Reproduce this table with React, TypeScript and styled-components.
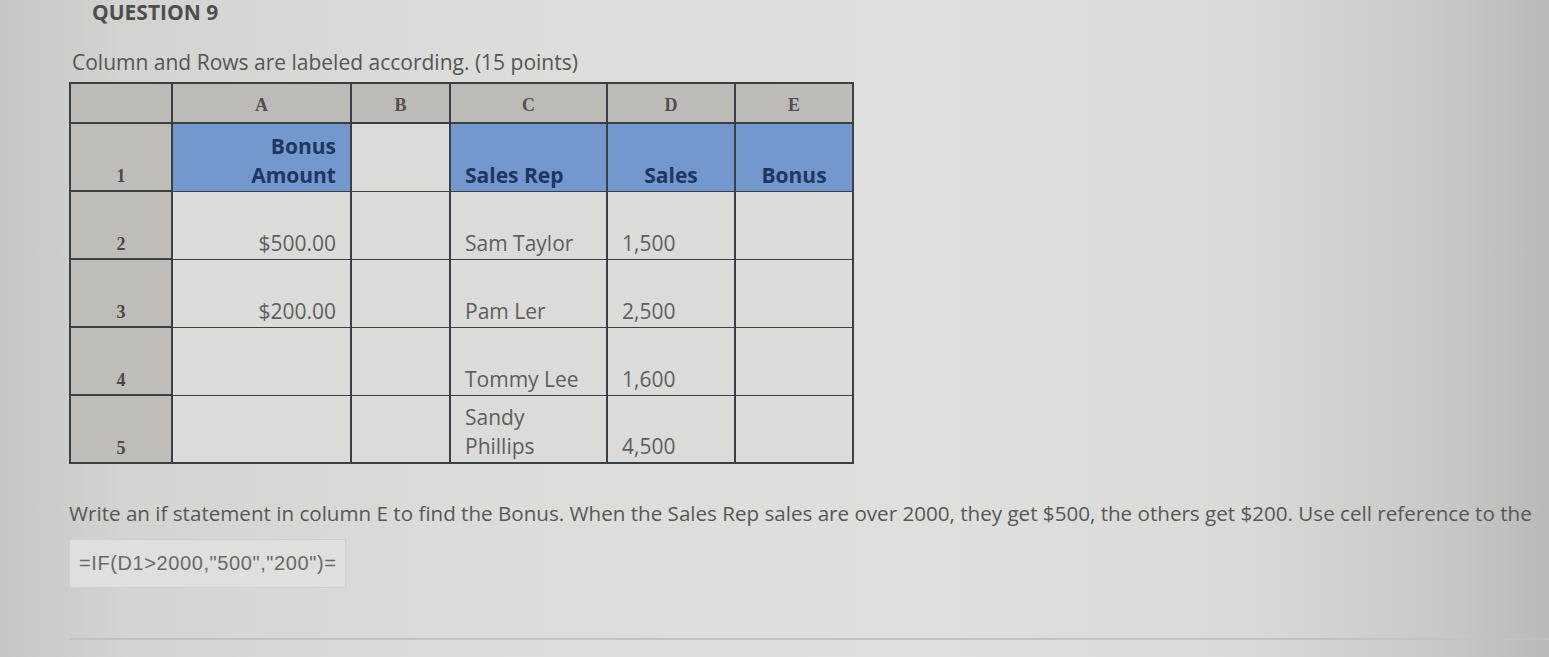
import React from "react";
import styled, { createGlobalStyle } from "styled-components";

const Global = createGlobalStyle`
  html, body { margin: 0; padding: 0; }
  body {
    width: 1549px;
    height: 657px;
    overflow: hidden;
    font-family: "Open Sans", "Liberation Sans", sans-serif;
    background: linear-gradient(90deg, #c6c6c4 0%, #d3d3d1 8%, #dcdcda 30%, #dfdfdd 60%, #dadad8 80%, #c8c8c6 93%, #b9b9b8 100%);
  }
`;

const Page = styled.div`
  height: 657px;
  padding: 0 0 0 69px;
  box-sizing: border-box;
`;

const Heading = styled.div`
  margin: 0 0 0 23px;
  font-size: 21px;
  line-height: 24px;
  font-weight: 700;
  color: #4e4e4e;
`;

const Prompt = styled.div`
  margin: 24px 0 0 3px;
  font-size: 21px;
  line-height: 28px;
  color: #555;
`;

const Sheet = styled.table`
  margin-top: 6px;
  border-collapse: collapse;
  table-layout: fixed;
  border: 2px solid #3b3f44;
`;

const Col = styled.col<{ $w: number }>`
  width: ${(p) => p.$w}px;
`;

const HeadCell = styled.th`
  height: 34px;
  padding: 4px 0 0;
  background: #bdbbb8;
  border: 2px solid #3b3f44;
  font-family: "Liberation Serif", "DejaVu Serif", serif;
  font-weight: 700;
  font-size: 18px;
  color: #505050;
  text-align: center;
`;

const RowNum = styled.td`
  height: 63px;
  padding: 0 0 3px;
  background: #bfbdba;
  border: 2px solid #3b3f44;
  font-family: "Liberation Serif", "DejaVu Serif", serif;
  font-weight: 700;
  font-size: 18px;
  color: #484848;
  text-align: center;
  vertical-align: bottom;
`;

const Cell = styled.td<{ $blue?: boolean; $align?: "left" | "right" | "center" }>`
  height: 63px;
  padding: 0 14px 1px;
  background: ${(p) => (p.$blue ? "#7398cd" : "#dbdbd9")};
  border: 2px solid #3b3f44;
  border-width: 1px 2px;
  font-size: 21px;
  line-height: 29px;
  color: ${(p) => (p.$blue ? "#1e3760" : "#5e5e5e")};
  font-weight: ${(p) => (p.$blue ? 700 : 400)};
  text-align: ${(p) => p.$align || "left"};
  vertical-align: bottom;
`;

const Instruction = styled.div`
  margin-top: 35px;
  font-size: 20.6px;
  line-height: 28px;
  color: #575757;
  white-space: nowrap;
`;

const Answer = styled.div`
  margin-top: 12px;
  width: 277px;
  height: 49px;
  display: flex;
  align-items: center;
  padding-left: 9px;
  box-sizing: border-box;
  border: 1px solid #cfcfcd;
  background: #dfdfdd;
  font-family: "Liberation Sans", Arial, sans-serif;
  font-size: 20px;
  letter-spacing: 0.6px;
  color: #6a6a6a;
`;

const Rule = styled.div`
  margin-top: 50px;
  height: 0;
  border-top: 2px solid #c2c2c0;
`;

type Row = { n: number; a: string; c: string; d: string };

const rows: Row[] = [
  { n: 2, a: "$500.00", c: "Sam Taylor", d: "1,500" },
  { n: 3, a: "$200.00", c: "Pam Ler", d: "2,500" },
  { n: 4, a: "", c: "Tommy Lee", d: "1,600" },
  { n: 5, a: "", c: "Sandy Phillips", d: "4,500" },
];

export default function App() {
  return (
    <>
      <Global />
      <Page>
        <Heading>QUESTION 9</Heading>
        <Prompt>Column and Rows are labeled according. (15 points)</Prompt>
        <Sheet>
          <colgroup>
            <Col $w={102} />
            <Col $w={179} />
            <Col $w={99} />
            <Col $w={157} />
            <Col $w={128} />
            <Col $w={118} />
          </colgroup>
          <thead>
            <tr>
              <HeadCell></HeadCell>
              <HeadCell>A</HeadCell>
              <HeadCell>B</HeadCell>
              <HeadCell>C</HeadCell>
              <HeadCell>D</HeadCell>
              <HeadCell>E</HeadCell>
            </tr>
          </thead>
          <tbody>
            <tr>
              <RowNum>1</RowNum>
              <Cell $blue $align="right">
                Bonus
                <br />
                Amount
              </Cell>
              <Cell></Cell>
              <Cell $blue>Sales Rep</Cell>
              <Cell $blue $align="center">Sales</Cell>
              <Cell $blue $align="center">Bonus</Cell>
            </tr>
            {rows.map((r) => (
              <tr key={r.n}>
                <RowNum>{r.n}</RowNum>
                <Cell $align="right">{r.a}</Cell>
                <Cell></Cell>
                <Cell>{r.c}</Cell>
                <Cell>{r.d}</Cell>
                <Cell></Cell>
              </tr>
            ))}
          </tbody>
        </Sheet>
        <Instruction>
          Write an if statement in column E to find the Bonus. When the Sales Rep sales are over 2000, they get $500, the others get $200. Use cell reference to the
        </Instruction>
        <Answer>=IF(D1&gt;2000,"500","200")=</Answer>
        <Rule />
      </Page>
    </>
  );
}
